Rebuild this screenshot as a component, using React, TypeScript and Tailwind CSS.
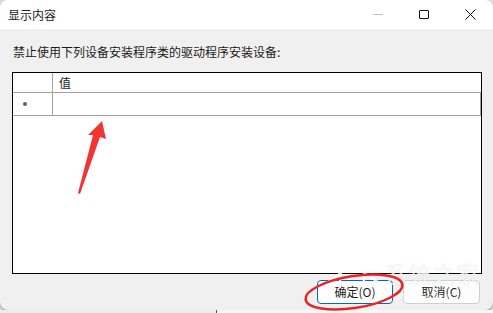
import React from 'react';

const font = { fontFamily: '"Noto Sans CJK SC", "Noto Sans", sans-serif' };

export default function App() {
  return (
    <div className="relative w-[493px] h-[313px] overflow-hidden bg-[#dcdcdc] text-[#1a1a1a]" style={font}>
      {/* dialog window */}
      <div className="flex flex-col w-[493px] h-[310px] bg-[#f0f0f0] rounded-lg overflow-hidden shadow-[0_1px_2px_rgba(0,0,0,0.35)]">
        {/* title bar */}
        <div className="flex items-center h-[29px] bg-white shrink-0">
          <span className="pl-2 text-[12px] leading-none">显示内容</span>
          <div className="ml-auto flex items-center h-full">
            <div className="w-[46px] h-full flex items-center justify-center">
              <div className="w-[10px] h-px bg-[#c4c4c4]" />
            </div>
            <div className="w-[46px] h-full flex items-center justify-center">
              <div className="w-[10px] h-[9px] border border-[#111] rounded-[1px]" />
            </div>
            <div className="w-[46px] h-full flex items-center justify-center">
              <svg width="11" height="11" viewBox="0 0 11 11">
                <path d="M0.5 0.5 L10.5 10.5 M10.5 0.5 L0.5 10.5" stroke="#111" strokeWidth="1" />
              </svg>
            </div>
          </div>
        </div>

        {/* body */}
        <div className="flex flex-col flex-1 px-3 pt-[15px] pb-[6px]">
          <p className="text-[12px] leading-[16px] pl-px">禁止使用下列设备安装程序类的驱动程序安装设备:</p>

          {/* grid */}
          <div className="mt-[12px] w-[470px] h-[202px] border border-black bg-white">
            <div className="flex h-[20px] border-b border-[#a0a0a0]">
              <div className="w-[40px] border-r border-[#a0a0a0]" />
              <div className="pl-[6px] text-[12px] leading-[19px]">值</div>
            </div>
            <div className="flex h-[23px] border-b border-r border-[#a0a0a0]">
              <div className="w-[40px] border-r border-[#a0a0a0] flex items-center pl-[10px]">
                <span className="w-[4px] h-[4px] rounded-full bg-[#606060]" />
              </div>
              <div className="flex-1" />
            </div>
          </div>

          {/* buttons */}
          <div className="flex justify-end gap-[10px] mt-[6px] pr-px">
            <button className="w-[76px] h-[24px] rounded-[4px] border border-[#0067c0] bg-white text-[12px] leading-none">
              确定(O)
            </button>
            <button className="w-[77px] h-[24px] rounded-[4px] border border-[#d0d0d0] bg-[#fdfdfd] text-[12px] leading-none">
              取消(C)
            </button>
          </div>
        </div>
      </div>

      {/* background strip below dialog */}
      <div className="flex h-[3px] bg-[#ececec]">
        <div className="ml-[216px] w-[277px] border-l border-[#555] bg-[#f7f7f7]" />
      </div>

      {/* watermark logo */}
      <svg className="absolute left-[326px] top-[262px] pointer-events-none" width="56" height="28" viewBox="0 0 56 28">
        <path d="M2 20 L26 3 L52 20 M14 14 L14 26 M38 14 L38 26" stroke="rgba(255,255,255,0.85)" strokeWidth="2.5" fill="none" />
      </svg>
      <div className="absolute left-[384px] top-[262px] flex flex-col items-start pointer-events-none">
        <span className="text-[23px] leading-none text-white/80 tracking-[1px] [text-shadow:0_0_1px_rgba(0,0,0,0.15)]">系统之家</span>
        <span className="text-[6px] leading-none mt-[9px] ml-[12px] text-white/80 tracking-[0.5px]">XITONGZHIJIA.NET</span>
      </div>

      {/* annotations */}
      <svg className="absolute inset-0 pointer-events-none" width="493" height="313" viewBox="0 0 493 313">
        <polygon points="102,121 106,139 100,137 80,194 78,193 93,135 88,135" fill="#f23434" />
        <ellipse cx="354" cy="292" rx="49" ry="16" transform="rotate(-9 354 292)" fill="none" stroke="#e8262a" strokeWidth="2.5" />
      </svg>
    </div>
  );
}
